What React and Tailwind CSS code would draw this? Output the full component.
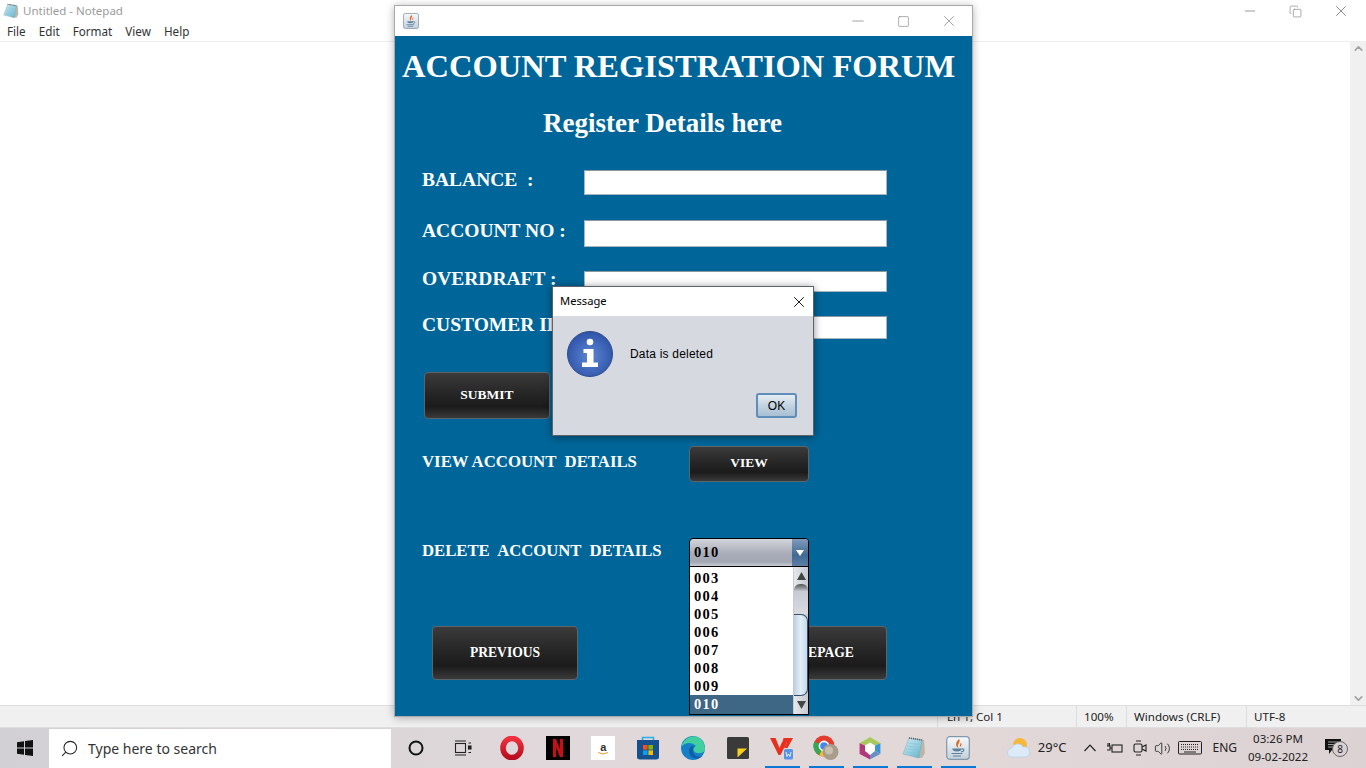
import React from 'react';
import { Search, X, Minus, Square, Copy, ChevronUp, ChevronDown, Volume2 } from 'lucide-react';

const serif = "font-['Liberation_Serif',serif] font-bold";
const blackButton = "flex items-center justify-center rounded-[4px] border border-[#5f6468] bg-[linear-gradient(180deg,#3b3b3b_0%,#262626_45%,#1b1b1b_75%,#3a3a3a_100%)] text-white";

function NotepadIcon({ size = 16, id = "padA" }) {
  return (
    <svg width={size} height={size} viewBox="0 0 24 24">
      <defs>
        <linearGradient id={id} x1="0" y1="0" x2="1" y2="1">
          <stop offset="0%" stopColor="#d5eef6" />
          <stop offset="100%" stopColor="#5fb3cc" />
        </linearGradient>
      </defs>
      <path d="M9 2 L22 4 L23 17 L20 22 L12 21 Z" fill="#b9b7a8" />
      <path d="M7 2 L20 4 L17 22 L1 18 Z" fill={`url(#${id})`} stroke="#7da6b6" strokeWidth="0.5" />
      <path d="M7 2 L20 4" stroke="#5a5a5a" strokeWidth="1.6" strokeDasharray="1 1" />
      <path d="M6 7 L17 8.5 M5 10 L16.5 11.5 M4 13 L16 14.5 M3.5 16 L15.5 17.5" stroke="#8cc3d6" strokeWidth="0.7" />
    </svg>
  );
}

function JavaIcon({ size = 16, id = "javaA" }) {
  return (
    <svg width={size} height={size} viewBox="0 0 24 24">
      <defs>
        <linearGradient id={id} x1="0" y1="0" x2="0" y2="1">
          <stop offset="0%" stopColor="#f7f9fb" />
          <stop offset="100%" stopColor="#c3d0db" />
        </linearGradient>
      </defs>
      <rect x="0.7" y="0.7" width="22.6" height="22.6" rx="3" fill={`url(#${id})`} stroke="#8298ab" strokeWidth="1.2" />
      <path d="M13 3 C15.5 6 10 8 12.5 12 C9 10 9.5 6.5 13 3 Z M15 6.5 C14.5 8 13.5 9 14 11 C15.5 9.5 16 8 15 6.5 Z" fill="#e2661b" />
      <path d="M6.5 12.5 H15.5 V14 Q11 17 6.5 14 Z" fill="#5d7f9c" />
      <path d="M15.5 13 Q19 12.5 17.5 15 L15 16" fill="none" stroke="#5d7f9c" strokeWidth="1.1" />
      <path d="M5.5 17.5 H16.5 M7 20 H15" stroke="#5d7f9c" strokeWidth="1.2" />
    </svg>
  );
}

function FormRow({ label, top, height }) {
  return (
    <div className={`flex items-center pl-[27px] ${top}`}>
      <span className={`-mt-[6px] w-[162px] whitespace-pre text-[19.5px] leading-none text-white ${serif}`}>{label}</span>
      <div className={`w-[303px] ${height} border border-[#a9b4bc] border-t-[#8d979f] bg-white`} />
    </div>
  );
}

function InfoDialog() {
  return (
    <div className="absolute left-[157px] top-[280px] z-10 h-[150px] w-[262px] border border-[#5d6268] bg-[#d6d9e0] shadow-[0_1px_8px_rgba(0,0,0,0.45)]">
      <div className="flex h-[29px] items-center justify-between bg-white pl-[7px] pr-[5px] font-['Noto_Sans',sans-serif] text-[11.2px] text-black">
        <span>Message</span>
        <X size={18} strokeWidth={1.2} />
      </div>
      <div className="flex items-center pl-[14px] pt-[15px]">
        <svg width="46" height="46" viewBox="0 0 46 46">
          <defs>
            <radialGradient id="infoBlue" cx="50%" cy="55%" r="60%">
              <stop offset="0%" stopColor="#5d86d2" />
              <stop offset="100%" stopColor="#2a4fa6" />
            </radialGradient>
          </defs>
          <circle cx="23" cy="23" r="22.5" fill="url(#infoBlue)" stroke="#2d4a8c" />
          <circle cx="23" cy="11" r="3.3" fill="#fff" />
          <path d="M16.5 18 H26.5 V31.5 H31 V36 H15 V31.5 H20 V22 H16.5 Z" fill="#fff" />
        </svg>
        <span className="ml-[17px] -mt-[1px] font-['Liberation_Sans',sans-serif] text-[12px] tracking-[0.2px] text-black">Data is deleted</span>
      </div>
      <div className="flex justify-end pr-[16px] pt-[16px]">
        <div className="flex h-[25px] w-[41px] items-center justify-center rounded-[3px] border-2 border-[#5f8fb8] bg-[linear-gradient(180deg,#e6edf3_0%,#c3d3e0_50%,#a9bfd2_100%)] font-['Liberation_Sans',sans-serif] text-[12px] text-black">OK</div>
      </div>
    </div>
  );
}

function ComboPopup() {
  const items = ["003", "004", "005", "006", "007", "008", "009"];
  return (
    <div className="absolute left-[294px] top-[560px] z-10 flex h-[149px] w-[120px] border border-black bg-white">
      <div className="flex-1 pt-[2px]">
        {items.map(i => (
          <div key={i} className={`h-[18px] pl-[4px] text-[14.5px] leading-[18px] tracking-[1.2px] text-black ${serif}`}>{i}</div>
        ))}
        <div className={`h-[19px] bg-[#3e6685] pl-[4px] text-[14.5px] leading-[18px] tracking-[1.2px] text-white ${serif}`}>010</div>
      </div>
      <div className="flex w-[15px] flex-col border-l border-[#c8ccd2] bg-[linear-gradient(90deg,#e5e7eb,#c6c9d0)]">
        <div className="flex h-[17px] items-center justify-center text-[#444]">
          <svg width="9" height="8" viewBox="0 0 9 8"><path d="M4.5 0 L9 8 H0 Z" fill="currentColor" /></svg>
        </div>
        <div className="h-[30px] rounded-t-[6px] bg-[linear-gradient(180deg,#555_0%,#c8cbd2_25%,#d8dae0_100%)]" />
        <div className="h-[82px] rounded-r-[7px] border border-l-0 border-[#33506e] bg-[linear-gradient(90deg,#bcd0e2,#e2eef7_50%,#c5dbec)]" />
        <div className="flex flex-1 items-center justify-center text-[#444]">
          <svg width="9" height="8" viewBox="0 0 9 8"><path d="M0 0 H9 L4.5 8 Z" fill="currentColor" /></svg>
        </div>
      </div>
    </div>
  );
}

function JavaWindow() {
  return (
    <div className="absolute left-[394px] top-[5px] z-10 h-[712px] w-[579px] border border-[#a9a9a9] bg-[#006699] shadow-[0_1px_8px_rgba(0,0,0,0.3)]">
      <div className="flex h-[30px] items-center bg-white pl-[8px]">
        <JavaIcon />
        <div className="ml-auto flex items-center text-[#777]">
          <Minus size={18} strokeWidth={0.9} className="mr-[30px]" />
          <Square size={13} strokeWidth={1.1} className="mr-[30px]" />
          <X size={18} strokeWidth={0.9} className="mr-[14px]" />
        </div>
      </div>

      <h1 className={`mt-[10px] h-[40px] whitespace-pre pl-[7px] text-[32.5px] leading-[40px] text-white ${serif}`}>ACCOUNT REGISTRATION FORUM</h1>
      <h2 className={`mt-[20px] h-[34px] pl-[148px] text-[27px] leading-[34px] text-white ${serif}`}>Register Details here</h2>

      <FormRow label="BALANCE  :" top="mt-[30px]" height="h-[25px]" />
      <FormRow label="ACCOUNT NO :" top="mt-[25px]" height="h-[27px]" />
      <FormRow label="OVERDRAFT :" top="mt-[24px]" height="h-[21px]" />
      <FormRow label="CUSTOMER ID :" top="mt-[24px]" height="h-[23px]" />

      <div className="mt-[33px] pl-[29px]">
        <div className={`${blackButton} h-[47px] w-[126px] text-[13.5px] ${serif}`}>SUBMIT</div>
      </div>

      <div className="mt-[27px] flex items-center pl-[27px]">
        <span className={`-mt-[4px] w-[267px] whitespace-pre text-[16.8px] leading-none text-white ${serif}`}>VIEW ACCOUNT  DETAILS</span>
        <div className={`${blackButton} h-[36px] w-[120px] pb-[2px] text-[13.5px] ${serif}`}>VIEW</div>
      </div>

      <div className="mt-[56px] flex items-center pl-[27px]">
        <span className={`-mt-[3px] w-[267px] whitespace-pre text-[16.7px] leading-none text-white ${serif}`}>DELETE  ACCOUNT  DETAILS</span>
        <div className="flex h-[29px] w-[120px] rounded-t-[4px] border border-black bg-[linear-gradient(180deg,#d3d5db_0%,#a8acb8_55%,#a4a8b4_85%,#c9ccd2_100%)]">
          <span className={`flex-1 pl-[4px] text-[14.5px] leading-[27px] tracking-[1.2px] text-black ${serif}`}>010</span>
          <div className="flex w-[16px] items-center justify-center rounded-tr-[3px] bg-[linear-gradient(180deg,#7f9bbb_0%,#416a93_60%,#5d80a5_100%)]">
            <svg width="8" height="6" viewBox="0 0 8 6"><path d="M0 0 H8 L4 6 Z" fill="#fff" /></svg>
          </div>
        </div>
      </div>

      <div className="mt-[59px] flex pl-[37px]">
        <div className={`${blackButton} h-[54px] w-[146px] text-[13.6px] ${serif}`}>PREVIOUS</div>
        <div className={`${blackButton} ml-[163px] h-[54px] w-[146px] text-[13.6px] ${serif}`}>HOMEPAGE</div>
      </div>

      <InfoDialog />
      <ComboPopup />
    </div>
  );
}

function TaskSlot({ children, running, width = "w-[44.9px]" }) {
  return (
    <div className={`flex h-full ${width} flex-col items-center`}>
      <div className="flex flex-1 items-center justify-center pt-[2px]">{children}</div>
      <div className={`h-[2px] w-[35px] ${running ? "bg-[#0a78d4]" : ""}`} />
    </div>
  );
}

function TaskIcons() {
  return (
    <div className="flex h-full items-center pl-[3px]">
      <TaskSlot width="w-[44px]">
        <svg width="16" height="16" viewBox="0 0 16 16"><circle cx="8" cy="8" r="6.5" fill="none" stroke="#111" strokeWidth="2" /></svg>
      </TaskSlot>
      <TaskSlot width="w-[50px]">
        <svg width="18" height="16" viewBox="0 0 18 16" fill="none" stroke="#222" strokeWidth="1.1">
          <rect x="1.5" y="3.5" width="10" height="9" />
          <path d="M1 1 H12 M1 15 H12 M14.5 3 H17 M14.5 12.5 H17" />
          <rect x="14.5" y="6" width="2.5" height="3" fill="#222" />
        </svg>
      </TaskSlot>
      <TaskSlot width="w-[48px]">
        <svg width="24" height="24" viewBox="0 0 24 24">
          <defs>
            <linearGradient id="operaRed" x1="0" y1="0" x2="0" y2="1">
              <stop offset="0%" stopColor="#f0303c" />
              <stop offset="100%" stopColor="#b80f20" />
            </linearGradient>
          </defs>
          <ellipse cx="12" cy="12" rx="9" ry="9.6" fill="none" stroke="url(#operaRed)" strokeWidth="5.6" />
        </svg>
      </TaskSlot>
      <TaskSlot>
        <div className="flex h-[24px] w-[24px] items-center justify-center bg-black">
          <svg width="10" height="18" viewBox="0 0 10 18"><path d="M0 0 H3.2 L6.8 10 V0 H10 V18 H6.8 L3.2 8 V18 H0 Z" fill="#c5101a" /></svg>
        </div>
      </TaskSlot>
      <TaskSlot>
        <div className="flex h-[24px] w-[24px] flex-col items-center justify-center bg-white font-['Liberation_Sans',sans-serif] text-[11px] font-bold leading-[10px] text-[#333]">
          <span>a</span>
          <svg width="12" height="3" viewBox="0 0 12 3"><path d="M1 0.5 Q6 3.5 11 0.5" fill="none" stroke="#ef9b2a" strokeWidth="1" /></svg>
        </div>
      </TaskSlot>
      <TaskSlot>
        <svg width="24" height="24" viewBox="0 0 24 24">
          <path d="M6.5 5 V1.5 H17.5 V5" fill="none" stroke="#29b0e8" strokeWidth="1.6" />
          <path d="M1 4 H23 V21 Q23 23.5 20 23.5 H4 Q1 23.5 1 21 Z" fill="#16508f" />
          <rect x="7" y="9" width="4.6" height="4.6" fill="#f25022" />
          <rect x="12.4" y="9" width="4.6" height="4.6" fill="#7fba00" />
          <rect x="7" y="14.4" width="4.6" height="4.6" fill="#00a4ef" />
          <rect x="12.4" y="14.4" width="4.6" height="4.6" fill="#ffb900" />
        </svg>
      </TaskSlot>
      <TaskSlot>
        <svg width="24" height="24" viewBox="0 0 24 24">
          <circle cx="12" cy="12" r="12" fill="#1580c8" />
          <path d="M0.5 11 C2 3 9 0 14 0.3 C20 1 24 7 24 13 C24 17 18 18 14.5 16.5 C11.5 15 12 11 15 10 C11 6 4 6 0.5 11 Z" fill="#41cfa0" />
          <path d="M8 15 C8 11 11 10 14 10 C11 12 11 17 15 20 C18 21.5 21 20.5 22 19.5 C18 25 8 23 8 15 Z" fill="#0f5fa8" />
        </svg>
      </TaskSlot>
      <TaskSlot>
        <svg width="22" height="22" viewBox="0 0 22 22">
          <rect width="22" height="22" rx="1.5" fill="#3a3a3a" />
          <path d="M10.5 11.5 H20 L11 20 H10.5 Z" fill="#f7d117" />
        </svg>
      </TaskSlot>
      <TaskSlot running width="w-[44px]">
        <svg width="24" height="24" viewBox="0 0 24 24">
          <path d="M0 2 H5.5 L9.5 12 L12 6 H17 L10.5 19 H8.5 Z" fill="#e8301c" />
          <path d="M13.5 2 H23 L17.5 12 H14 L17 6 H12.5 Z" fill="#e8301c" />
          <rect x="14" y="13" width="9" height="10.5" rx="1.5" fill="#5a94e6" />
          <path d="M16 16 L17 20.5 L18.5 18 L20 20.5 L21 16" fill="none" stroke="#fff" strokeWidth="0.8" />
        </svg>
      </TaskSlot>
      <TaskSlot running width="w-[44px]">
        <svg width="26" height="26" viewBox="0 0 26 26">
          <circle cx="11" cy="11" r="10.5" fill="#e23d2e" />
          <path d="M11 11 L21.5 11 A10.5 10.5 0 0 1 6 20.2 Z" fill="#f7c02c" />
          <path d="M11 11 L6 20.2 A10.5 10.5 0 0 1 1.4 6.5 Z" fill="#34a853" />
          <circle cx="11" cy="11" r="4.6" fill="#4285f4" stroke="#fff" strokeWidth="1.6" />
          <circle cx="17.5" cy="17" r="8" fill="#a89c8a" />
          <circle cx="16" cy="15.5" r="4" fill="#c8bfb0" />
        </svg>
      </TaskSlot>
      <TaskSlot running width="w-[44px]">
        <svg width="24" height="24" viewBox="0 0 24 24">
          <path d="M12 1 L22.5 7 V18 L12 23.5 L1.5 18 V7 Z" fill="#fff" />
          <path d="M12 1 L22.5 7 L17 9.5 L12 6.5 L7 9.5 L1.5 7 Z" fill="#a9c85a" />
          <path d="M22.5 7 V18 L17 15 V9.5 Z" fill="#3f93d1" />
          <path d="M1.5 7 V18 L12 23.5 V19 L7 15 V9.5 Z" fill="#b03a78" />
          <path d="M12 23.5 L22.5 18 L17 15 L12 19 Z" fill="#6b8fc0" />
        </svg>
      </TaskSlot>
      <TaskSlot running width="w-[44px]">
        <NotepadIcon size={24} id="padB" />
      </TaskSlot>
      <TaskSlot running width="w-[44px]">
        <JavaIcon size={24} id="javaB" />
      </TaskSlot>
    </div>
  );
}

function Tray() {
  return (
    <div className="ml-auto flex h-full items-center font-['Noto_Sans',sans-serif] text-[#222]">
      <svg width="24" height="22" viewBox="0 0 24 22">
        <circle cx="13" cy="8" r="7" fill="#f5b83a" />
        <path d="M5 20 A4.5 4.5 0 0 1 5 11 A6 6 0 0 1 16 10 A5 5 0 0 1 19 20 Z" fill="#dcebf7" stroke="#a9cde8" strokeWidth="0.6" />
      </svg>
      <span className="ml-[7px] whitespace-nowrap text-[13px]">29°C</span>
      <svg className="ml-[18px]" width="12" height="8" viewBox="0 0 12 8" fill="none" stroke="#222" strokeWidth="1.2">
        <path d="M0.5 7 L6 1.2 L11.5 7" />
      </svg>
      <svg className="ml-[10px]" width="17" height="14" viewBox="0 0 17 14" fill="none" stroke="#222" strokeWidth="1.1">
        <rect x="6" y="4" width="10" height="7" />
        <path d="M1 5 H4 V9 H1 M4 7 H6 M2 5 V2 M3.5 5 V2" />
      </svg>
      <svg className="ml-[10px]" width="14" height="18" viewBox="0 0 14 18" fill="none" stroke="#222" strokeWidth="1.1">
        <rect x="1" y="5" width="8" height="8" rx="1.5" />
        <path d="M9 8 L13 6 V12 L9 10 M3 2 H8 M3 16 H8" />
      </svg>
      <Volume2 size={17} strokeWidth={1.2} className="ml-[7px]" />
      <svg className="ml-[7px]" width="24" height="14" viewBox="0 0 24 14" fill="none" stroke="#222" strokeWidth="1">
        <rect x="0.5" y="0.5" width="23" height="12.5" rx="1" />
        <path d="M3 3.5 H21 M3 6 H21 M3 8.5 H21" strokeDasharray="1 1" />
        <path d="M6 11 H18" />
      </svg>
      <span className="ml-[10px] whitespace-nowrap text-[12px]">ENG</span>
      <div className="ml-[10px] flex w-[62px] flex-col items-center whitespace-nowrap text-[11.5px] leading-[18px]">
        <span>03:26 PM</span>
        <span>09-02-2022</span>
      </div>
      <div className="relative ml-[16px] mr-[23px] h-[24px] w-[18px]">
        <svg className="mt-[3px]" width="16" height="15" viewBox="0 0 16 15">
          <path d="M0 0 H16 V11 H7 L4 15 V11 H0 Z" fill="#111" />
          <path d="M3 3 H13 M3 5.5 H13 M3 8 H13" stroke="#ddd" strokeWidth="0.7" />
        </svg>
        <span className="absolute left-[7px] top-[5px] flex h-[16px] w-[16px] items-center justify-center rounded-full border border-[#666] bg-[#d8d0d2] text-[10px] leading-none">8</span>
      </div>
    </div>
  );
}

export default function App() {
  return (
    <div className="relative flex h-[768px] w-[1366px] flex-col overflow-hidden bg-white font-['Noto_Sans',sans-serif]">
      {/* Notepad behind everything */}
      <div className="flex h-[22px] items-center pl-[3px]">
        <NotepadIcon id="padA" />
        <span className="ml-[4px] text-[11.5px] text-[#9a9a9a]">Untitled - Notepad</span>
        <div className="ml-auto flex items-center text-[#666]">
          <Minus size={16} strokeWidth={1} className="mr-[31px]" />
          <Copy size={13} strokeWidth={1} className="mr-[30px]" />
          <X size={18} strokeWidth={1} className="mr-[16px]" />
        </div>
      </div>
      <div className="flex h-[20px] items-center gap-[13px] border-b border-[#eeeeee] pl-[7px] pt-[1px] text-[11.7px] text-[#333]">
        <span>File</span>
        <span>Edit</span>
        <span>Format</span>
        <span>View</span>
        <span>Help</span>
      </div>
      <div className="flex flex-1 justify-end">
        <div className="flex w-[16px] flex-col items-center justify-between bg-[#f0f0f0] text-[#a3a3a3]">
          <ChevronUp size={13} strokeWidth={3} />
          <ChevronDown size={13} strokeWidth={3} />
        </div>
      </div>
      <div className="flex h-[23px] items-center whitespace-nowrap border-y border-[#dedede] bg-[#f0f0f0] text-[11.6px] text-[#222]">
        <span className="w-[937px]" />
        <span className="w-[139px] border-l border-[#dcdcdc] pl-[9px] leading-[21px]">Ln 1, Col 1</span>
        <span className="w-[50px] border-l border-[#dcdcdc] pl-[7px] leading-[21px]">100%</span>
        <span className="w-[120px] border-l border-[#dcdcdc] pl-[7px] leading-[21px]">Windows (CRLF)</span>
        <span className="border-l border-[#dcdcdc] pl-[7px] leading-[21px]">UTF-8</span>
      </div>

      {/* Taskbar */}
      <div className="flex h-[40px] items-center bg-[linear-gradient(90deg,#d2d0d5_0%,#e0d8da_40%,#e2d8d8_70%,#dcd2d4_100%)]">
        <div className="flex w-[49px] items-center justify-center">
          <svg width="16" height="16" viewBox="0 0 16 16" fill="#111">
            <path d="M0 2.2 L7 1.2 V7.4 H0 Z M8 1 L16 0 V7.4 H8 Z M0 8.6 H7 V14.8 L0 13.8 Z M8 8.6 H16 V16 L8 15 Z" />
          </svg>
        </div>
        <div className="flex h-[39px] w-[342px] items-center bg-white pl-[11px]">
          <Search size={19} strokeWidth={1.3} className="-scale-x-100 text-[#222]" />
          <span className="ml-[9px] text-[14px] text-[#333]">Type here to search</span>
        </div>
        <TaskIcons />
        <Tray />
      </div>

      <JavaWindow />
    </div>
  );
}
